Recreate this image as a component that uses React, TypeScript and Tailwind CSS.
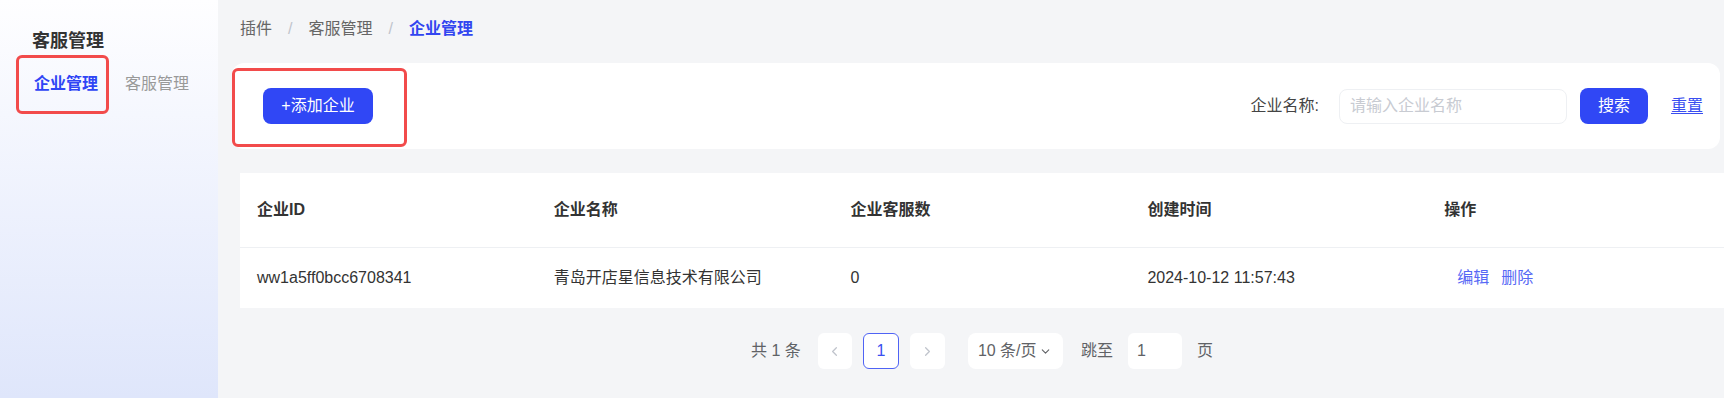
import React from "react";
import { ChevronLeft, ChevronRight, ChevronDown } from "lucide-react";

const font = { fontFamily: '"Liberation Sans", "Noto Sans CJK SC", sans-serif' };

export default function App() {
  const cols = ["企业ID", "企业名称", "企业客服数", "创建时间", "操作"];
  return (
    <div className="flex w-[1724px] h-[398px] overflow-hidden text-[16px] text-[#333]" style={font}>
      {/* Sidebar */}
      <aside className="relative w-[218px] shrink-0 bg-linear-to-b from-[#fefeff] to-[#dfe6fb]">
        <div className="pt-[29px] pl-[32px] text-[18px] leading-[24px] font-bold text-[#333]">客服管理</div>
        <div className="mt-[19px] flex items-center pl-[34px] gap-[27px] leading-[24px]">
          <span className="font-bold text-[#2f45f5]">企业管理</span>
          <span className="text-[#999]">客服管理</span>
        </div>
        <div className="absolute left-[16px] top-[55px] w-[93px] h-[59px] border-[3px] border-[#f24b4b] rounded-[6px]" />
      </aside>

      {/* Main */}
      <main className="flex-1 flex flex-col bg-[#f4f5f7] pl-[14px]">
        <div className="pt-[17px] pl-[8px] flex items-center leading-[24px] text-[#666]">
          <span>插件</span>
          <span className="mx-[16px] text-[#c0c4cc]">/</span>
          <span>客服管理</span>
          <span className="mx-[16px] text-[#c0c4cc]">/</span>
          <span className="font-bold text-[#3246f0]">企业管理</span>
        </div>

        <div className="relative mt-[22px] mr-[4px] h-[86px] rounded-[12px] bg-white flex items-center justify-between pl-[31px] pr-[17px]">
          <button className="w-[110px] h-[36px] rounded-[8px] bg-[#3047f5] text-white leading-[36px]">+添加企业</button>
          <div className="flex items-center">
            <span className="text-[#444]">企业名称:</span>
            <div className="ml-[20px] w-[228px] h-[35px] rounded-[8px] border border-[#eef0f3] flex items-center pl-[10px] text-[#c8cbd2]">
              请输入企业名称
            </div>
            <button className="ml-[13px] w-[68px] h-[36px] rounded-[8px] bg-[#3047f5] text-white">搜索</button>
            <span className="ml-[23px] text-[#3a4ef0] underline underline-offset-2">重置</span>
          </div>
          <div className="absolute left-0 top-[5px] w-[175px] h-[79px] border-[3px] border-[#f24b4b] rounded-[6px]" />
        </div>

        <div className="mt-[24px] ml-[8px] bg-white">
          <div className="grid grid-cols-5 h-[75px] items-center border-b border-[#eef0f3]">
            {cols.map((c) => (
              <div key={c} className="pl-[17px] font-bold text-[#333]">{c}</div>
            ))}
          </div>
          <div className="grid grid-cols-5 h-[60px] items-center text-[#333]">
            <div className="pl-[17px]">ww1a5ff0bcc6708341</div>
            <div className="pl-[17px]">青岛开店星信息技术有限公司</div>
            <div className="pl-[17px]">0</div>
            <div className="pl-[17px]">2024-10-12 11:57:43</div>
            <div className="pl-[30px] flex gap-[12px] text-[#5668f5]">
              <span>编辑</span>
              <span>删除</span>
            </div>
          </div>
        </div>

        <div className="ml-[8px] mt-[25px] flex justify-center">
          <div className="flex items-center text-[#606266]">
            <span>共 1 条</span>
            <div className="ml-[17px] w-[34px] h-[36px] rounded-[6px] bg-white flex items-center justify-center text-[#c0c4cc]">
              <ChevronLeft size={15} strokeWidth={2} />
            </div>
            <div className="ml-[11px] w-[36px] h-[36px] rounded-[6px] bg-white border border-[#4f63f5] flex items-center justify-center text-[#3a4ff0]">
              1
            </div>
            <div className="ml-[11px] w-[35px] h-[36px] rounded-[6px] bg-white flex items-center justify-center text-[#c0c4cc]">
              <ChevronRight size={15} strokeWidth={2} />
            </div>
            <div className="ml-[23px] w-[95px] h-[36px] rounded-[8px] bg-white flex items-center pl-[10px]">
              <span>10 条/页</span>
              <ChevronDown size={13} strokeWidth={2} className="ml-[2px]" />
            </div>
            <span className="ml-[18px]">跳至</span>
            <div className="ml-[15px] w-[54px] h-[36px] rounded-[6px] bg-white flex items-center pl-[9px]">1</div>
            <span className="ml-[15px]">页</span>
          </div>
        </div>
      </main>
    </div>
  );
}
